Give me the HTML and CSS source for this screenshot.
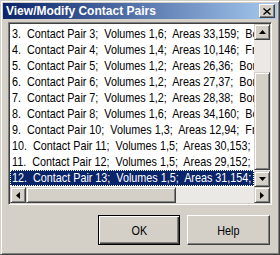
FILE: index.html
```html
<!DOCTYPE html>
<html lang="en">
<head>
    <meta charset="UTF-8">
    <title>View/Modify Contact Pairs</title>
    <link rel="stylesheet" href="styles.css">
</head>
<body>
    <div class="window">
        <div class="titlebar">
            <span class="title">View/Modify Contact Pairs</span>
            <div class="close">
                <svg width="8" height="7" viewBox="0 0 8 7"><path d="M0.5 0.5 L7.5 6.5 M7.5 0.5 L0.5 6.5" stroke="#000" stroke-width="1.4"/></svg>
            </div>
        </div>
        <div class="content">
            <div class="listbox">
                <div class="items">
                    <div class="item"><span>3.  Contact Pair 3;  Volumes 1,6;  Areas 33,159;  Bonded</span></div>
                    <div class="item"><span>4.  Contact Pair 4;  Volumes 1,4;  Areas 10,146;  Frictional</span></div>
                    <div class="item"><span>5.  Contact Pair 5;  Volumes 1,2;  Areas 26,36;  Bonded</span></div>
                    <div class="item"><span>6.  Contact Pair 6;  Volumes 1,2;  Areas 27,37;  Bonded</span></div>
                    <div class="item"><span>7.  Contact Pair 7;  Volumes 1,2;  Areas 28,38;  Bonded</span></div>
                    <div class="item"><span>8.  Contact Pair 8;  Volumes 1,6;  Areas 34,160;  Bonded</span></div>
                    <div class="item"><span>9.  Contact Pair 10;  Volumes 1,3;  Areas 12,94;  Frictional</span></div>
                    <div class="item"><span>10.  Contact Pair 11;  Volumes 1,5;  Areas 30,153;  Bonded</span></div>
                    <div class="item"><span>11.  Contact Pair 12;  Volumes 1,5;  Areas 29,152;  Bonded</span></div>
                    <div class="item selected"><span>12.  Contact Pair 13;  Volumes 1,5;  Areas 31,154;  Bonded</span></div>
                </div>
                <div class="vscroll">
                    <div class="sbtn"><svg width="7" height="4" viewBox="0 0 7 4"><polygon points="3.5,0 7,4 0,4" fill="#000"/></svg></div>
                    <div class="vtrack"><div class="vthumb"></div></div>
                    <div class="sbtn"><svg width="7" height="4" viewBox="0 0 7 4"><polygon points="0,0 7,0 3.5,4" fill="#000"/></svg></div>
                </div>
                <div class="hscroll">
                    <div class="sbtn"><svg width="4" height="7" viewBox="0 0 4 7"><polygon points="4,0 4,7 0,3.5" fill="#000"/></svg></div>
                    <div class="htrack"><div class="hthumb"></div></div>
                    <div class="sbtn"><svg width="4" height="7" viewBox="0 0 4 7"><polygon points="0,0 4,3.5 0,7" fill="#000"/></svg></div>
                </div>
            </div>
            <div class="buttons">
                <div class="btn default"><span>OK</span></div>
                <div class="btn"><span>Help</span></div>
            </div>
        </div>
    </div>
</body>
</html>
```
FILE: styles.css
```css
body {
    margin: 0;
    background: #d4d0c8;
    font-family: "Liberation Sans", Arial, sans-serif;
}
.window {
    width: 280px;
    height: 255px;
    box-sizing: border-box;
    background: #d4d0c8;
    border: 1px solid;
    border-color: #d4d0c8 #404040 #404040 #d4d0c8;
    box-shadow: inset 1px 1px #fff, inset -1px -1px #808080;
    padding: 2px;
    display: flex;
    flex-direction: column;
}
.titlebar {
    height: 16px;
    flex-shrink: 0;
    background: linear-gradient(90deg, #0a246a, #a6caf0);
    display: flex;
    align-items: center;
    justify-content: space-between;
    padding: 0 2px 0 3px;
}
.title {
    color: #fff;
    font-weight: bold;
    font-size: 12px;
}
.close {
    width: 16px;
    height: 14px;
    box-sizing: border-box;
    background: #d4d0c8;
    border: 1px solid;
    border-color: #fff #404040 #404040 #fff;
    box-shadow: inset -1px -1px #808080;
    display: flex;
    align-items: center;
    justify-content: center;
}
.content {
    flex: 1;
    padding: 3px 5px 0 5px;
    display: flex;
    flex-direction: column;
}
.listbox {
    height: 183px;
    box-sizing: border-box;
    background: #fff;
    border: 1px solid;
    border-color: #808080 #fff #fff #808080;
    box-shadow: inset 1px 1px #404040, inset -1px -1px #d4d0c8;
    padding: 1px;
    display: grid;
    grid-template-columns: 1fr 16px;
    grid-template-rows: 1fr 16px;
}
.items {
    overflow: hidden;
    padding-top: 2px;
}
.item {
    height: 16px;
    line-height: 16px;
    font-size: 13px;
    color: #000;
    white-space: pre;
    padding-left: 2px;
}
.item span, .btn span {
    display: inline-block;
    transform: scaleX(0.83);
}
.item span {
    transform-origin: 0 0;
}
.item.selected {
    background: #0a246a;
    color: #fff;
    outline: 1px dotted #fff;
    outline-offset: -1px;
}
.vscroll {
    display: flex;
    flex-direction: column;
}
.hscroll {
    grid-column: 1 / 3;
    display: flex;
}
.sbtn {
    width: 16px;
    height: 16px;
    flex-shrink: 0;
    box-sizing: border-box;
    background: #d4d0c8;
    border: 1px solid;
    border-color: #d4d0c8 #404040 #404040 #d4d0c8;
    box-shadow: inset 1px 1px #fff, inset -1px -1px #808080;
    display: flex;
    align-items: center;
    justify-content: center;
}
.vtrack, .htrack {
    flex: 1;
    background: #ebe9e5;
}
.vthumb, .hthumb {
    box-sizing: border-box;
    background: #d4d0c8;
    border: 1px solid;
    border-color: #d4d0c8 #404040 #404040 #d4d0c8;
    box-shadow: inset 1px 1px #fff, inset -1px -1px #808080;
}
.vthumb {
    height: 98px;
    margin-top: 32px;
}
.htrack {
    display: flex;
}
.hthumb {
    width: 150px;
}
.buttons {
    display: flex;
    justify-content: flex-end;
    gap: 7px;
    margin-top: 10px;
    padding-right: 2px;
}
.btn {
    width: 83px;
    height: 30px;
    box-sizing: border-box;
    background: #d4d0c8;
    border: 1px solid;
    border-color: #fff #404040 #404040 #fff;
    box-shadow: inset -1px -1px #808080;
    display: flex;
    align-items: center;
    justify-content: center;
    font-size: 13px;
}
.btn.default {
    width: 82px;
    border-color: #000;
    box-shadow: inset 1px 1px #fff, inset -1px -1px #404040, inset -2px -2px #808080;
}
```
